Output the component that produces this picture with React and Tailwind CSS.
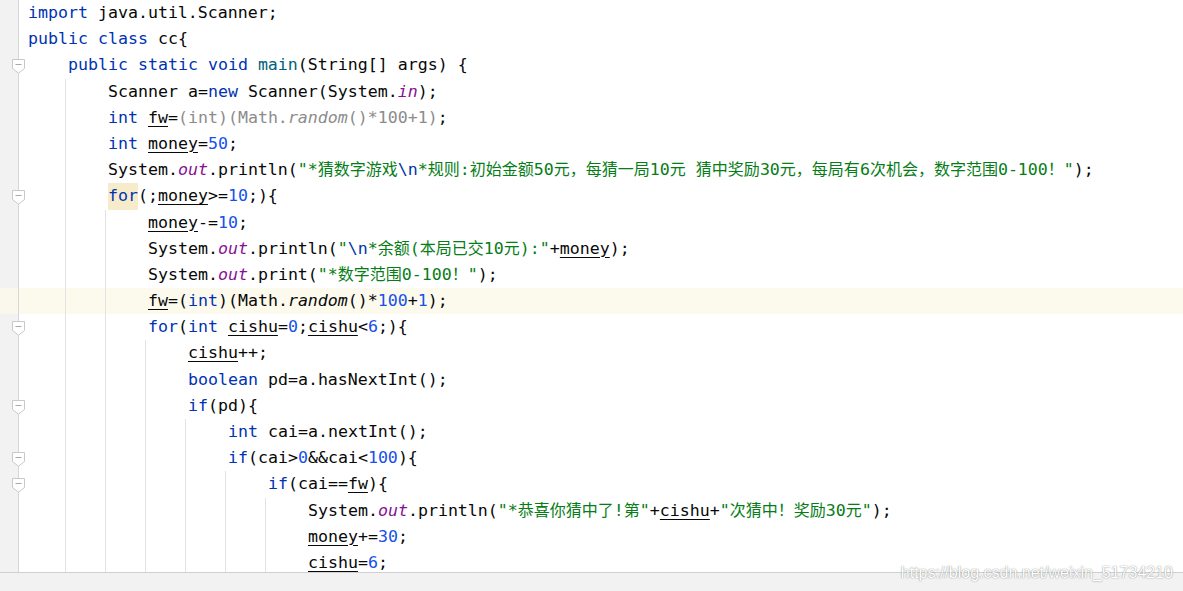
import React from "react";

const LINES = [
  { l: 0, t: [["k", "import"], ["t", " java.util.Scanner;"]] },
  { l: 0, t: [["k", "public"], ["t", " "], ["k", "class"], ["t", " cc{"]] },
  { l: 1, fold: true, t: [["k", "public"], ["t", " "], ["k", "static"], ["t", " "], ["k", "void"], ["t", " "], ["m", "main"], ["t", "(String[] args) {"]] },
  { l: 2, t: [["t", "Scanner a="], ["k", "new"], ["t", " Scanner(System."], ["f", "in"], ["t", ");"]] },
  { l: 2, t: [["k", "int"], ["t", " "], ["u", "fw"], ["t", "="], ["g", "(int)(Math."], ["gi", "random"], ["g", "()*100+1)"], ["t", ";"]] },
  { l: 2, t: [["k", "int"], ["t", " "], ["u", "money"], ["t", "="], ["n", "50"], ["t", ";"]] },
  { l: 2, t: [["t", "System."], ["f", "out"], ["t", ".println("], ["s", "\"*猜数字游戏"], ["e", "\\n"], ["s", "*规则:初始金额50元，每猜一局10元 猜中奖励30元，每局有6次机会，数字范围0-100！\""], ["t", ");"]] },
  { l: 2, fold: true, t: [["h", "for"], ["t", "(;"], ["u", "money"], ["t", ">="], ["n", "10"], ["t", ";){"]] },
  { l: 3, t: [["u", "money"], ["t", "-="], ["n", "10"], ["t", ";"]] },
  { l: 3, t: [["t", "System."], ["f", "out"], ["t", ".println("], ["s", "\""], ["e", "\\n"], ["s", "*余额(本局已交10元):\""], ["t", "+"], ["u", "money"], ["t", ");"]] },
  { l: 3, t: [["t", "System."], ["f", "out"], ["t", ".print("], ["s", "\"*数字范围0-100！\""], ["t", ");"]] },
  { l: 3, cur: true, t: [["u", "fw"], ["t", "=("], ["k", "int"], ["t", ")(Math."], ["i", "random"], ["t", "()*"], ["n", "100"], ["t", "+"], ["n", "1"], ["t", ");"]] },
  { l: 3, fold: true, t: [["k", "for"], ["t", "("], ["k", "int"], ["t", " "], ["u", "cishu"], ["t", "="], ["n", "0"], ["t", ";"], ["u", "cishu"], ["t", "<"], ["n", "6"], ["t", ";){"]] },
  { l: 4, t: [["u", "cishu"], ["t", "++;"]] },
  { l: 4, t: [["k", "boolean"], ["t", " pd=a.hasNextInt();"]] },
  { l: 4, fold: true, t: [["k", "if"], ["t", "(pd){"]] },
  { l: 5, t: [["k", "int"], ["t", " cai=a.nextInt();"]] },
  { l: 5, fold: true, t: [["k", "if"], ["t", "(cai>"], ["n", "0"], ["t", "&&cai<"], ["n", "100"], ["t", "){"]] },
  { l: 6, fold: true, t: [["k", "if"], ["t", "(cai=="], ["u", "fw"], ["t", "){"]] },
  { l: 7, t: [["t", "System."], ["f", "out"], ["t", ".println("], ["s", "\"*恭喜你猜中了!第\""], ["t", "+"], ["u", "cishu"], ["t", "+"], ["s", "\"次猜中！奖励30元\""], ["t", ");"]] },
  { l: 7, t: [["u", "money"], ["t", "+="], ["n", "30"], ["t", ";"]] },
  { l: 7, t: [["u", "cishu"], ["t", "="], ["n", "6"], ["t", ";"]] },
];

const CLS = {
  t: "text-[#080808]",
  k: "text-[#0033b3]",
  h: "text-[#0033b3] bg-[#f6ebcb] inline-block leading-[26.2px] align-top",
  n: "text-[#1750eb]",
  s: "text-[#067d17]",
  e: "text-[#0037a6]",
  f: "text-[#871094] italic",
  m: "text-[#00627a]",
  g: "text-[#8c8c8c]",
  gi: "text-[#8c8c8c] italic",
  i: "text-[#080808] italic",
  u: "text-[#080808] underline decoration-[#080808] underline-offset-[3px]",
};

function withCJK(text) {
  const parts = text.split(/([\u3000-\u303f\u4e00-\u9fff\uff00-\uffef]+)/);
  return parts.map((p, i) =>
    i % 2 === 1 ? (
      <span key={i} className="text-[16px] leading-[16px] font-['Noto_Sans_CJK_SC',sans-serif]">
        {p}
      </span>
    ) : (
      p
    )
  );
}

function FoldMarker() {
  return (
    <svg
      width="13"
      height="15"
      viewBox="0 0 13 15"
      className="absolute left-[12px] top-[7px]"
    >
      <path
        d="M0.5 0.5 H12.5 V9.5 L6.5 14.2 L0.5 9.5 Z"
        fill="#ffffff"
        stroke="#c9c9c9"
        strokeWidth="1"
      />
      <path d="M3.5 5.5 H9.5" stroke="#a8a8a8" strokeWidth="1" />
    </svg>
  );
}

function Line({ line }) {
  const guides = [];
  for (let j = 0; j < line.l; j++) {
    guides.push(
      <span
        key={j}
        className={
          "shrink-0 w-[40px] self-stretch " +
          (j >= 1 ? "border-l border-[#e3e3e3]" : "")
        }
      />
    );
  }
  return (
    <div
      className={
        "relative flex h-[26.2px] shrink-0 " + (line.cur ? "bg-[#fcfaed]" : "")
      }
    >
      <div
        className={
          "w-[19px] shrink-0 border-r border-[#d6d6d6] " +
          (line.cur ? "bg-[#faf8ec]" : "bg-[#f2f2f2]")
        }
      />
      <div className="flex flex-1 pl-[6px]">
        {guides}
        <div className="pl-[3px] whitespace-pre leading-[26.2px] h-[26.2px] overflow-visible">
          {line.t.map(([type, text], i) => (
            <span key={i} className={CLS[type]}>
              {type === "s" ? withCJK(text) : text}
            </span>
          ))}
        </div>
      </div>
      {line.fold && <FoldMarker />}
    </div>
  );
}

export default function App() {
  return (
    <div className="relative w-[1183px] h-[591px] overflow-hidden bg-white flex flex-col font-['DejaVu_Sans_Mono','Noto_Sans_CJK_SC',monospace] text-[16.6px]">
      <div className="h-[572px] shrink-0 overflow-hidden flex flex-col bg-white">
        {LINES.map((line, i) => (
          <Line key={i} line={line} />
        ))}
      </div>
      <div className="flex-1 bg-[#f2f2f2] border-t border-[#d0d0d0]" />
      <div className="absolute right-[10px] top-[563px] text-[16px] leading-[19px] text-white font-['Liberation_Sans',Arial,sans-serif] [text-shadow:0_0_1px_rgba(80,80,80,0.6),0_0_2px_rgba(120,120,120,0.4)]">
        https://blog.csdn.net/weixin_51734210
      </div>
    </div>
  );
}
